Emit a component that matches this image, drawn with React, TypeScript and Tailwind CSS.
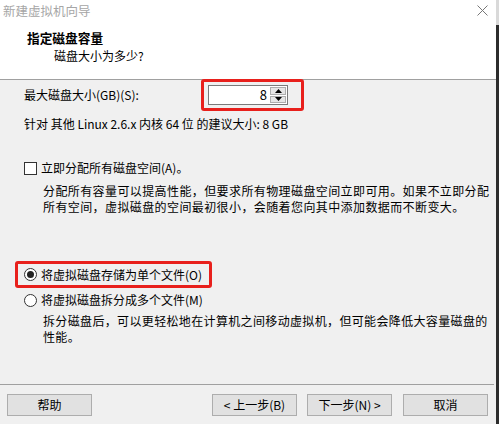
import React, { useState } from 'react';

const font = { fontFamily: '"Microsoft YaHei", "Noto Sans CJK SC", "Noto Sans", sans-serif' };

const Btn: React.FC<{ label: string; className?: string }> = ({ label, className }) => (
  <button
    className={`h-[22px] w-[85px] border border-[#adadad] bg-[#e1e1e1] text-[12px] leading-none text-black ${className || ''}`}
  >
    {label}
  </button>
);

export default function App() {
  const [size, setSize] = useState(8);
  const [allocate, setAllocate] = useState(false);
  const [mode, setMode] = useState<'single' | 'split'>('single');

  return (
    <div className="flex h-[424px] w-[499px] overflow-hidden bg-[#f0f0f0] text-[12px] text-black" style={font}>
      <div className="flex flex-1 flex-col">
        {/* header */}
        <div className="relative h-[79px] bg-white">
          <div className="absolute left-[3px] top-[2px] text-[12.5px] text-[#a6a6a6]">新建虚拟机向导</div>
          <svg className="absolute right-[8px] top-[5px]" width="11" height="11" viewBox="0 0 11 11">
            <path d="M0.5 0.5 L10.5 10.5 M10.5 0.5 L0.5 10.5" stroke="#777" strokeWidth="1" />
          </svg>
          <div className="absolute left-[27px] top-[29px] text-[12.7px] font-bold leading-[18px]">指定磁盘容量</div>
          <div className="absolute left-[54px] top-[47px] text-[12px] leading-[18px]">磁盘大小为多少?</div>
        </div>
        <div className="h-px bg-[#a0a0a0]" />

        {/* body */}
        <div className="flex flex-1 flex-col pl-[24px]">
          <div className="mt-[-1px] flex h-[32px] items-center">
            <span className="w-[177px]">最大磁盘大小(GB)(S):</span>
            <div className="flex h-[32px] w-[103px] items-center rounded-[3px] border-[3px] border-[#e8201c] pl-[4px]">
              <div className="flex h-[20px] w-[80px] items-center border border-[#7a7a7a] bg-white">
                <span className="flex-1 pr-[3px] text-right text-[13px]">{size}</span>
                <div className="flex h-full w-[17px] flex-col gap-px py-px pr-px">
                  <button onClick={() => setSize(size + 1)} className="flex flex-1 items-center justify-center border border-[#adadad] bg-[#e5e5e5]">
                    <svg width="7" height="4" viewBox="0 0 7 4"><path d="M0 4 L3.5 0 L7 4 Z" fill="#000" /></svg>
                  </button>
                  <button onClick={() => setSize(Math.max(1, size - 1))} className="flex flex-1 items-center justify-center border border-[#adadad] bg-[#e5e5e5]">
                    <svg width="7" height="4" viewBox="0 0 7 4"><path d="M0 0 L3.5 4 L7 0 Z" fill="#000" /></svg>
                  </button>
                </div>
              </div>
            </div>
          </div>
          <div className="mt-[5px] leading-[16px]">针对 其他 Linux 2.6.x 内核 64 位 的建议大小: 8 GB</div>

          <label className="mt-[28px] flex items-center leading-[16px]" onClick={() => setAllocate(!allocate)}>
            <span className="flex h-[13px] w-[13px] items-center justify-center border border-[#333] bg-white">
              {allocate && <span className="text-[10px] leading-none">✓</span>}
            </span>
            <span className="ml-[4px]">立即分配所有磁盘空间(A)。</span>
          </label>
          <p className="ml-[19px] mt-[7px] text-[12px] leading-[16px] tracking-[0.4px]">
            分配所有容量可以提高性能，但要求所有物理磁盘空间立即可用。如果不立即分配<br />
            所有空间，虚拟磁盘的空间最初很小，会随着您向其中添加数据而不断变大。
          </p>

          <div className="ml-[-9px] mt-[46px] flex h-[27px] w-[197px] items-center rounded-[3px] border-[3px] border-[#e8201c] pl-[6px]">
            <label className="flex items-center" onClick={() => setMode('single')}>
              <Radio on={mode === 'single'} />
              <span className="ml-[4px]">将虚拟磁盘存储为单个文件(O)</span>
            </label>
          </div>
          <label className="mt-[4px] flex items-center leading-[16px]" onClick={() => setMode('split')}>
            <Radio on={mode === 'split'} />
            <span className="ml-[4px]">将虚拟磁盘拆分成多个文件(M)</span>
          </label>
          <p className="ml-[19px] mt-[5px] text-[12px] leading-[16px] tracking-[0.35px]">
            拆分磁盘后，可以更轻松地在计算机之间移动虚拟机，但可能会降低大容量磁盘的<br />
            性能。
          </p>

          <div className="flex-1" />
        </div>
        <div className="mr-[2px] h-px bg-[#a0a0a0]" />
        <div className="flex h-[39px] items-start pt-[9px]">
          <Btn label="帮助" className="ml-[7px]" />
          <Btn label="< 上一步(B)" className="ml-[120px]" />
          <Btn label="下一步(N) >" className="ml-[10px]" />
          <Btn label="取消" className="ml-[11px]" />
        </div>
      </div>
      <div className="flex w-[3px] flex-col">
        <div className="h-[25px] bg-[#d9d9d9]" />
        <div className="flex-1 bg-[#2d2d2d]" />
      </div>
    </div>
  );
}

const Radio: React.FC<{ on: boolean }> = ({ on }) => (
  <span className="flex h-[13px] w-[13px] items-center justify-center rounded-full border border-[#333] bg-white">
    {on && <span className="h-[7px] w-[7px] rounded-full bg-[#222]" />}
  </span>
);
